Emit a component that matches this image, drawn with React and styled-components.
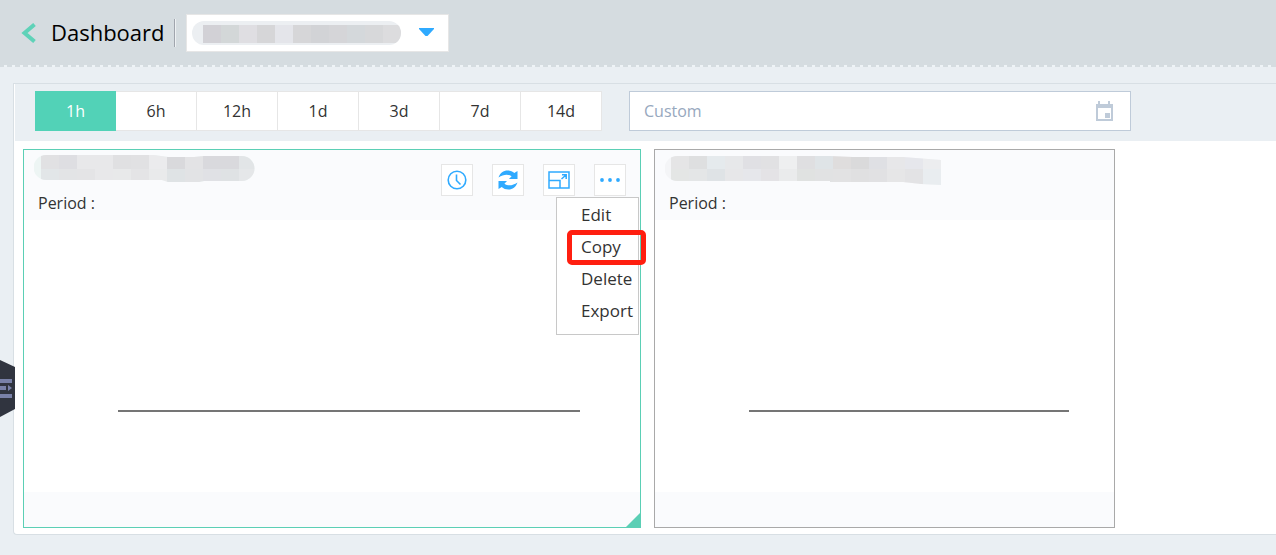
import React, { useState } from "react";
import styled, { createGlobalStyle } from "styled-components";

const teal = "#52d2b7";
const blue = "#2faaff";

const GlobalStyle = createGlobalStyle`
  * { box-sizing: border-box; }
  body {
    margin: 0;
    background: #eaeff3;
    color: #333;
    font-family: "Open Sans", "Noto Sans", sans-serif;
    font-size: 16px;
    line-height: 24px;
  }
  button, input, select { font: inherit; color: inherit; margin: 0; }
`;

const Page = styled.div`
  position: relative;
  display: flex;
  flex-direction: column;
  min-height: 100vh;
`;

const Header = styled.header`
  display: flex;
  align-items: center;
  height: 67px;
  padding: 0 20px 2px;
  background:
    repeating-linear-gradient(90deg, #d5dce0 0 4px, #eef3f6 4px 7px, #d5dce0 7px 8px) bottom / 100% 2px no-repeat,
    #d5dce0;
`;

const BackButton = styled.button`
  display: flex;
  padding: 0;
  border: 0;
  background: none;
  cursor: pointer;
`;

const Title = styled.h1`
  margin: 0 9px 0 14px;
  padding-bottom: 2px;
  font-size: 22px;
  line-height: 32px;
  font-weight: 400;
  color: #000;
`;

const Divider = styled.span`
  width: 2px;
  height: 28px;
  margin: 0 10px 0 0;
  background: #a0a5ad;
  border-right: 1px solid #eef1f3;
`;

const Picker = styled.label`
  position: relative;
  display: flex;
  align-items: center;
  width: 263px;
  height: 38px;
  background: #fff;
  border: 1px solid #e6e6e6;
`;

const PickerSelect = styled.select`
  width: 100%;
  height: 100%;
  border: 0;
  background: none;
  appearance: none;
`;

const PickerValue = styled.span`
  position: absolute;
  left: 5px;
  display: flex;
  pointer-events: none;
`;

const PickerArrow = styled.span`
  position: absolute;
  right: 14px;
  display: flex;
  pointer-events: none;
`;

const Main = styled.main`
  margin: 16px 0 0 13px;
  background: #fff;
  border: 1px solid #d8dfe4;
  border-right: 0;
  border-radius: 0 0 0 4px;
`;

const Toolbar = styled.div`
  display: flex;
  align-items: center;
  gap: 27px;
  margin-left: 1px;
  padding: 7px 20px 10px;
  background: #eaeff3;
`;

const RangeGroup = styled.div`
  display: flex;
`;

const RangeButton = styled.button`
  width: 81px;
  height: 40px;
  padding: 0;
  border: 1px solid ${(p) => (p.$active ? teal : "#e6e6e6")};
  border-left-width: ${(p) => (p.$active ? "1px" : "0")};
  background: ${(p) => (p.$active ? teal : "#fff")};
  color: ${(p) => (p.$active ? "#fff" : "#333")};
  cursor: pointer;
`;

const CustomField = styled.label`
  display: flex;
  align-items: center;
  width: 502px;
  height: 40px;
  padding: 0 16px 0 14px;
  background: #fff;
  border: 1px solid #bfcbd9;
`;

const CustomInput = styled.input`
  flex: 1;
  min-width: 0;
  padding: 0;
  border: 0;
  outline: 0;
  background: none;
  &::placeholder { color: #97a8be; opacity: 1; }
`;

const Board = styled.div`
  display: grid;
  grid-template-columns: minmax(0, 618fr) minmax(0, 461fr) minmax(0, 148fr);
  gap: 13px;
  padding: 8px 0 6px 9px;
`;

const Card = styled.section`
  position: relative;
  display: flex;
  flex-direction: column;
  border: 1px solid ${(p) => (p.$selected ? "#5bcfb5" : "#a9a9a9")};
`;

const CardHead = styled.div`
  display: flex;
  justify-content: space-between;
  height: 70px;
  padding: 0 14px 0 10px;
  background: #fafbfd;
`;

const CardTitle = styled.div`
  display: flex;
  flex-direction: column;
  gap: 6px;
  padding-top: 4px;
`;

const Period = styled.span`
  padding-left: 4px;
`;

const Actions = styled.div`
  display: flex;
  gap: 19px;
  padding-top: 14px;
`;

const IconButton = styled.button`
  display: flex;
  align-items: center;
  justify-content: center;
  width: 32px;
  height: 32px;
  padding: 0;
  background: #fff;
  border: 1px solid #e6e6e6;
  color: ${blue};
  cursor: pointer;
`;

const MenuAnchor = styled.div`
  position: relative;
`;

const Menu = styled.div`
  position: absolute;
  z-index: 2;
  top: 33px;
  right: -13px;
  width: 83px;
  padding: 1px 0 7px;
  background: #fff;
  border: 1px solid #c8c8c8;
  font-size: 17px;
`;

const MenuItem = styled.button`
  position: relative;
  display: block;
  width: 100%;
  height: 32px;
  padding: 0 0 0 24px;
  border: 0;
  background: none;
  text-align: left;
  cursor: pointer;
`;

const Highlight = styled.span`
  position: absolute;
  inset: -1px -8px -2px 10px;
  border: 5px solid #ff1f10;
  border-radius: 5px;
`;

const Chart = styled.div`
  height: 272px;
  padding: 190px 9.7% 0 94px;
`;

const Axis = styled.div`
  height: 2px;
  background: #757575;
`;

const CardFoot = styled.div`
  height: 35px;
  background: #fafbfd;
`;

const ResizeCorner = styled.span`
  position: absolute;
  right: 0;
  bottom: 0;
  width: 14px;
  height: 14px;
  background: #5bcfb5;
  clip-path: polygon(100% 0, 100% 100%, 0 100%);
`;

const SideToggle = styled.button`
  position: absolute;
  left: 0;
  top: 360px;
  display: flex;
  padding: 0;
  border: 0;
  background: none;
  cursor: pointer;
`;

function Mosaic({ id, width, height, outline, start, cell, split, rows, base }) {
  return (
    <svg width={width} height={height} aria-hidden="true">
      <clipPath id={id}>
        <path d={outline} />
      </clipPath>
      <g clipPath={`url(#${id})`} shapeRendering="crispEdges">
        <rect width={width} height={height} fill={base} />
        {rows.map((row, r) =>
          row.map((fill, i) => (
            <rect
              key={`${r}-${i}`}
              x={start + i * cell}
              y={split[r]}
              width={cell}
              height={split[r + 1] - split[r]}
              fill={fill}
            />
          ))
        )}
      </g>
    </svg>
  );
}

const ranges = ["1h", "6h", "12h", "1d", "3d", "7d", "14d"];
const menuItems = ["Edit", "Copy", "Delete", "Export"];

const leftMask = {
  id: "mask-left", width: 222, height: 31, start: 7, cell: 18, split: [0, 15, 31], base: "#edf5f4",
  outline: "M12 1H120L134 3H160L170 2H208A12.500 12.500 0 0 1 208 27H170L165 28H134L128 26H12A12.500 12.500 0 0 1 12 1Z",
  rows: [
    ["#e1e1e3", "#dedee2", "#e8e8ea", "#e8e8ea", "#e0e0e2", "#e1e1e3", "#ebebed", "#d9d9dc", "#e3e3e5", "#d9d9dd", "#d9d9dd", "#e2e5e7"],
    ["#e2e6e8", "#e3e4e6", "#e4e4e6", "#e8e8ea", "#e8e9ea", "#e4e4e6", "#e9eaeb", "#dfe3e5", "#e2e3e5", "#e0e1e5", "#dfe2e4", "#e5e7e9"],
  ],
};

const rightMask = {
  id: "mask-right", width: 276, height: 31, start: 6, cell: 18, split: [0, 15, 31], base: "#f4f5f7",
  outline: "M12 2H165L188 3H238L276 6V31L256 30L238 28H165V27H12A12.500 12.500 0 0 1 12 2Z",
  rows: [
    ["#e5e5e6", "#dedfe0", "#e5eaed", "#e7e8ea", "#e0e0e4", "#e1e1e3", "#eeeff0", "#dfdfe1", "#dfe4e7", "#dfdddd", "#dadadb", "#dfe0e4", "#e7e7e9", "#e6e7ec", "#ecedef"],
    ["#e4e6e5", "#e4e6e7", "#dfe3e6", "#e7e7e9", "#e6e7eb", "#e4e3e6", "#eaebec", "#e0e2e1", "#e1e2e3", "#e2e2e3", "#e0e0e1", "#e1e1e3", "#e6e6e7", "#e3e3e5", "#e9edf0"],
  ],
};

const pickerMask = {
  id: "mask-picker", width: 210, height: 26, start: 11, cell: 18, split: [5, 23], base: "#eceff2",
  outline: "M12 1H197A12 12 0 0 1 197 25H12A12 12 0 0 1 12 1Z",
  rows: [["#d2d1d6", "#d3d7d8", "#dfdee2", "#d6d6d8", "#e4e5ea", "#d6d6d8", "#d2d3d6", "#d5d5d8", "#d4d8db", "#d7d8da", "#dcdcde"]],
};

function ClockIcon() {
  return (
    <svg width="20" height="20" viewBox="0 0 20 20" fill="none" stroke="currentColor" strokeWidth="1.600">
      <circle cx="10" cy="10" r="8.800" />
      <path d="M9.500 4.500V10.500L13.500 14.500" />
    </svg>
  );
}

function RefreshIcon() {
  return (
    <svg width="20" height="20" viewBox="0 0 20 20" fill="currentColor">
      <path d="M0.500 7.500C2 3 5.500 0.500 9.500 0.500C12.300 0.500 14.500 1.300 16.300 3L19.500 1V9H11L13.600 6.200C9.800 3.700 5.200 4.400 0.500 7.500Z" />
      <path d="M19.500 12.500C18 17 14.500 19.500 10.500 19.500C7.700 19.500 5.500 18.700 3.700 17L0.500 19V11H9L6.400 13.800C10.200 16.300 14.800 15.600 19.500 12.500Z" />
    </svg>
  );
}

function ExpandIcon() {
  return (
    <svg width="22" height="18" viewBox="0 0 22 18" fill="none" stroke="currentColor" strokeWidth="1.500">
      <path d="M1 1H21V17H1ZM1 9.500H12V17" />
      <path d="M13.500 8L18 4M14 3.800H18.200V8" />
    </svg>
  );
}

function DotsIcon() {
  return (
    <svg width="20" height="4" viewBox="0 0 20 4" fill="currentColor">
      <circle cx="2" cy="2" r="1.900" />
      <circle cx="10" cy="2" r="1.900" />
      <circle cx="18" cy="2" r="1.900" />
    </svg>
  );
}

export default function App() {
  const [range, setRange] = useState("1h");
  return (
    <Page>
      <GlobalStyle />
      <Header>
        <BackButton aria-label="Back">
          <svg width="17" height="20" viewBox="0 0 17 20" fill="none" stroke="#5fd2b8" strokeWidth="4">
            <path d="M14.500 1.500L4.500 10L14.500 18.500" />
          </svg>
        </BackButton>
        <Title>Dashboard</Title>
        <Divider />
        <Picker>
          <PickerSelect aria-label="Dashboard name">
            <option value="current"></option>
          </PickerSelect>
          <PickerValue><Mosaic {...pickerMask} /></PickerValue>
          <PickerArrow>
            <svg width="15" height="9" fill={blue}><path d="M0 0H15V1L8.500 8H6.500L0 1Z" /></svg>
          </PickerArrow>
        </Picker>
      </Header>
      <Main>
        <Toolbar>
          <RangeGroup role="group" aria-label="Time range">
            {ranges.map((r) => (
              <RangeButton key={r} $active={r === range} aria-pressed={r === range} onClick={() => setRange(r)}>
                {r}
              </RangeButton>
            ))}
          </RangeGroup>
          <CustomField>
            <CustomInput type="text" placeholder="Custom" aria-label="Custom time range" />
            <svg width="19" height="20" viewBox="0 0 19 20" fill="#bfcbd9" shapeRendering="crispEdges">
              <path fillRule="evenodd" d="M3 0H5V3H13V0H15V3H18V20H1V3H3ZM3 7V18H16V7Z" />
              <path d="M10 12H15V17H10Z" />
            </svg>
          </CustomField>
        </Toolbar>
        <Board>
          <Card $selected>
            <CardHead>
              <CardTitle>
                <Mosaic {...leftMask} />
                <Period>Period :</Period>
              </CardTitle>
              <Actions>
                <IconButton aria-label="Period"><ClockIcon /></IconButton>
                <IconButton aria-label="Refresh"><RefreshIcon /></IconButton>
                <IconButton aria-label="Full screen"><ExpandIcon /></IconButton>
                <MenuAnchor>
                  <IconButton aria-label="More"><DotsIcon /></IconButton>
                  <Menu>
                    {menuItems.map((item) => (
                      <MenuItem key={item}>
                        {item}
                        {item === "Copy" && <Highlight />}
                      </MenuItem>
                    ))}
                  </Menu>
                </MenuAnchor>
              </Actions>
            </CardHead>
            <Chart><Axis /></Chart>
            <CardFoot />
            <ResizeCorner />
          </Card>
          <Card>
            <CardHead>
              <CardTitle>
                <Mosaic {...rightMask} />
                <Period>Period :</Period>
              </CardTitle>
            </CardHead>
            <Chart><Axis /></Chart>
            <CardFoot />
          </Card>
        </Board>
      </Main>
      <SideToggle aria-label="Toggle side menu">
        <svg width="15" height="57" viewBox="0 0 15 57">
          <path d="M0 0L15 7V49L0 57Z" fill="#30343f" />
          <path d="M0 19H12V23H0ZM0 26H6V30H0ZM8 25L12 28L8 31ZM0 34H12V38H0Z" fill="#7981a8" />
        </svg>
      </SideToggle>
    </Page>
  );
}
